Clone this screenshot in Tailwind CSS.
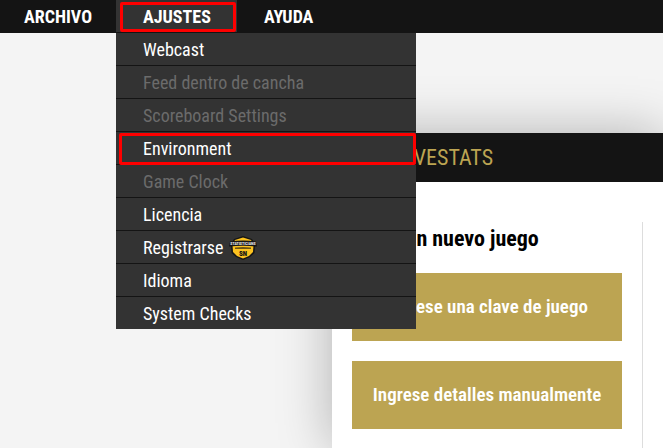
<!DOCTYPE html>
<html lang="es">
<head>
  <meta charset="UTF-8">
  <meta name="viewport" content="width=device-width, initial-scale=1">
  <title>FIBA LiveStats</title>
  <script src="https://cdn.jsdelivr.net/npm/@tailwindcss/browser@4"></script>
</head>
<body class="min-h-screen flex flex-col overflow-hidden bg-[#f4f4f4] font-['Roboto_Condensed','Roboto',sans-serif]">
  <header class="relative z-10 bg-[#141414] text-white">
    <nav class="flex h-[33px] text-lg font-bold">
      <button class="w-[116px] pl-6 text-left">ARCHIVO</button>
      <div class="relative">
        <button class="relative h-8 w-[121px] bg-[#333333] pt-0.5 pl-[27px] text-left">
          AJUSTES
          <span class="absolute left-1 right-px top-0.5 bottom-0 rounded-xs border-3 border-[#ff0000]"></span>
        </button>

        <!-- Menú desplegable -->
        <ul class="absolute left-0 top-full w-[300px] divide-y divide-[#141414] bg-[#333333] text-lg/[30px] font-normal">
          <li><button class="block w-full pt-0.5 pl-[27px] text-left">Webcast</button></li>
          <li><button disabled class="block w-full pt-0.5 pl-[27px] text-left text-[#6b6b6b]">Feed dentro de cancha</button></li>
          <li><button disabled class="block w-full pt-0.5 pl-[27px] text-left text-[#6b6b6b]">Scoreboard Settings</button></li>
          <li class="relative">
            <button class="block w-full pt-0.5 pl-[27px] text-left">Environment</button>
            <span class="absolute left-[3px] right-0 -bottom-px top-px rounded-xs border-3 border-[#ff0000]"></span>
          </li>
          <li><button disabled class="block w-full pt-0.5 pl-[27px] text-left text-[#6b6b6b]">Game Clock</button></li>
          <li><button class="block w-full pt-0.5 pl-[27px] text-left">Licencia</button></li>
          <li>
            <button class="flex w-full items-center gap-1.5 pt-0.5 pl-[27px] text-left">
              Registrarse
              <svg class="h-6 w-7" viewBox="0 0 28 24" aria-hidden="true">
                <path d="M14 0 23 3 26 8 25.500 17 21 21 14 24 7 21 2.500 17 2 8 5 3Z" fill="#151515"/>
                <path d="M14 1.500 22 4 24.500 9 24 16 20 20 14 22.500 8 20 4 16 3.500 9 6 4Z" fill="#fcc21f"/>
                <path d="M1 5.500Q14 3.500 27 5.500L28 10.500Q14 9 0 10.500Z" fill="#151515"/>
                <path d="M6 11.500Q14 10.500 22 11.500V13H6Z" fill="#6b5415"/>
                <text x="14" y="9" text-anchor="middle" font-size="4" font-weight="700" fill="#f0f0f0">STATISTICIANS</text>
                <text x="14" y="20" text-anchor="middle" font-size="7" font-weight="900" fill="#151515">SN</text>
              </svg>
            </button>
          </li>
          <li><button class="block w-full pt-0.5 pl-[27px] text-left">Idioma</button></li>
          <li><button class="block w-full pt-0.5 pl-[27px] text-left">System Checks</button></li>
        </ul>
      </div>
      <button class="px-[27px]">AYUDA</button>
    </nav>
  </header>

  <main class="ml-[332px] mt-[100px] flex flex-1 flex-col bg-white shadow-[0_0_50px_rgba(0,0,0,0.28)]">
    <h1 class="bg-[#141414] px-5 py-2 text-[22px]/[33px] text-[#bca452]">FIBA LIVESTATS</h1>
    <section class="mr-5 mt-10 flex flex-1 flex-col gap-5 border-r border-[#dddddd] px-5">
      <h2 class="pt-0.5 text-[22px]/[29px] font-bold text-black">Inicie un nuevo juego</h2>
      <button class="bg-[#bca452] py-5 text-[19px]/7 font-semibold text-white">Ingrese una clave de juego</button>
      <button class="bg-[#bca452] py-5 text-[19px]/7 font-semibold text-white">Ingrese detalles manualmente</button>
    </section>
  </main>
</body>
</html>
